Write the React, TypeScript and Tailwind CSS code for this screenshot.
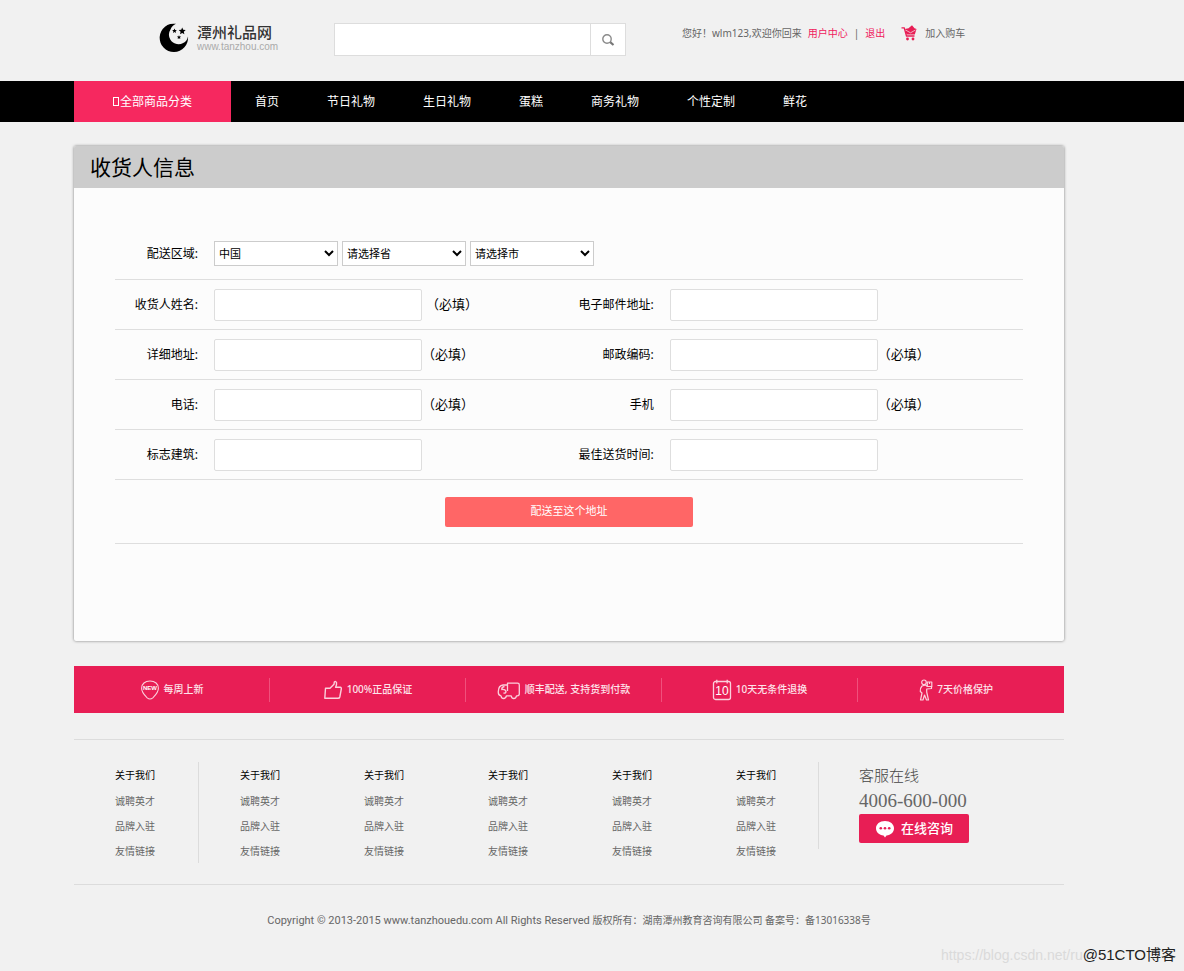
import type { ReactNode } from 'react';

const navItems = ['首页', '节日礼物', '生日礼物', '蛋糕', '商务礼物', '个性定制', '鲜花'];
const footerLinks = ['诚聘英才', '品牌入驻', '友情链接'];
const footerColumns = [0, 1, 2, 3, 4, 5];

function MoonLogo() {
  return (
    <svg viewBox="0 0 30 30" className="h-[30px] w-[30px]" aria-hidden="true">
      <path
        d="M17 .8A14.200 14.200 0 1 0 29 13.500A9.600 9.600 0 1 1 11.500 6.500C12.600 3.800 14.500 1.800 17 .8Z"
        fill="#000"
      />
      <path d="M23.200 4.500l1 2.300 2.500.2-1.900 1.700.6 2.500-2.200-1.300-2.200 1.300.6-2.500-1.900-1.700 2.500-.2z" fill="#000" />
      <path d="M15.500 5.500l.7 1.500 1.700.2-1.300 1.100.4 1.700-1.500-.9-1.500.9.4-1.700-1.300-1.100 1.700-.2z" fill="#000" />
      <path d="M20 12.200l.6 1.300 1.500.1-1.100 1 .3 1.400-1.300-.7-1.300.7.3-1.400-1.100-1 1.500-.1z" fill="#000" />
    </svg>
  );
}

function SearchIcon() {
  return (
    <svg viewBox="0 0 14 14" className="h-[14px] w-[14px]" fill="none" aria-hidden="true">
      <circle cx="6" cy="6" r="4.200" stroke="#8a8a8a" strokeWidth="1.400" />
      <path d="M9.200 9.200L12.500 12" stroke="#777" strokeWidth="2.200" />
    </svg>
  );
}

function CartIcon() {
  return (
    <svg viewBox="0 0 16 16" className="h-4 w-4" aria-hidden="true">
      <path d="M.5 2.800H3.200L5.500 11H13.500" fill="none" stroke="#e81e55" strokeWidth="1.300" />
      <path d="M3.800 4L7.500 3.200L11 .3L13.500 3.200L15.500 4L13.800 9.500H5.500Z" fill="#e81e55" />
      <path d="M4.500 5L9.500 7.800L14.500 5" fill="none" stroke="#f1f1f1" strokeWidth=".7" />
      <circle cx="6.500" cy="14" r="1.400" fill="#e81e55" />
      <circle cx="12" cy="14" r="1.400" fill="#e81e55" />
    </svg>
  );
}

function NewIcon() {
  return (
    <svg viewBox="0 0 20 20" className="h-5 w-5" aria-hidden="true">
      <path
        d="M10 1C15 1 18.400 4 18.400 8.200C18.400 12.500 15 15.500 12.800 17.800Q10 20.200 7.200 17.800C5 15.500 1.600 12.500 1.600 8.200C1.600 4 5 1 10 1Z"
        fill="none"
        stroke="#fbd0dc"
        strokeWidth="1.100"
      />
      <text x="10" y="10.300" textAnchor="middle" fontSize="6" fontWeight="700" fontFamily="Liberation Sans, sans-serif" fill="#fff">
        NEW
      </text>
    </svg>
  );
}

function ThumbIcon() {
  return (
    <svg viewBox="0 0 20 20" className="h-5 w-5" fill="none" stroke="#fbd0dc" strokeWidth="1.400" strokeLinejoin="round" aria-hidden="true">
      <path d="M2.500 8.200H7L11 4.300L11.300 2Q12.800 .9 13.500 2.600Q13.900 4.500 12.600 7.300H17.300Q18.600 7.400 18.300 9L16.800 17Q16.500 18.300 15 18.300H1.800Z" />
    </svg>
  );
}

function TruckIcon() {
  return (
    <svg viewBox="0 0 24 20" className="h-5 w-6" fill="none" stroke="#fbd0dc" strokeWidth="1.300" strokeLinejoin="round" aria-hidden="true">
      <path d="M10.500 3.200H20.500Q22.300 3.200 22.300 5V14Q22.300 15.800 20.300 15.800H19.500Q18.800 18.500 16.800 18.500Q14.800 18.500 14.200 15.800H9.500Q8.700 18.500 6.700 18.500Q4.500 18.500 4 15.800Q1 15.300 1.300 11.500Q1.500 5.500 6 5H10.500Z" />
      <path d="M10.500 5V11M7.500 6.500Q4.500 7 4.800 9.500Q8.500 9 9 11.500Q9 13.500 6.500 13" />
    </svg>
  );
}

function CalendarIcon() {
  return (
    <svg viewBox="0 0 20 22" className="h-[22px] w-5" aria-hidden="true">
      <rect x="1.500" y="2.500" width="17" height="18" rx="2" fill="none" stroke="#fbd0dc" strokeWidth="1.300" />
      <path d="M4.800 .8V4.500M15.200 .8V4.500" stroke="#fbd0dc" strokeWidth="1.300" />
      <text x="10" y="16.200" textAnchor="middle" fontSize="12" fontFamily="Liberation Sans, sans-serif" fill="#fff">
        10
      </text>
    </svg>
  );
}

function CourierIcon() {
  return (
    <svg viewBox="0 0 14 22" className="h-[22px] w-[14px]" fill="none" stroke="#fbd0dc" strokeWidth="1.200" strokeLinejoin="round" aria-hidden="true">
      <circle cx="5" cy="3.300" r="2.300" />
      <path d="M3 7Q1 9 1.300 12.500L3 14L1.500 21H4L5.500 16L7.500 21H9.500L7.700 13V10L12.500 9.500V7.500H8.500L6.500 6Z" />
      <path d="M8.300 3H12.800V7.500H8.300ZM10.500 3V5" />
    </svg>
  );
}

function ChatIcon() {
  return (
    <svg viewBox="0 0 20 18" className="h-[18px] w-5" aria-hidden="true">
      <path d="M10 1C15.200 1 19 4.200 19 8.300C19 12.300 15.800 15 11.500 15.500L10 17.500L8.500 15.500C4.200 15 1 12.300 1 8.300C1 4.200 4.800 1 10 1Z" fill="#fff" />
      <circle cx="5.800" cy="8.300" r="1.300" fill="#e81e55" />
      <circle cx="10" cy="8.300" r="1.300" fill="#e81e55" />
      <circle cx="14.200" cy="8.300" r="1.300" fill="#e81e55" />
    </svg>
  );
}

const services: { icon: ReactNode; text: string }[] = [
  { icon: <NewIcon />, text: '每周上新' },
  { icon: <ThumbIcon />, text: '100%正品保证' },
  { icon: <TruckIcon />, text: '顺丰配送, 支持货到付款' },
  { icon: <CalendarIcon />, text: '10天无条件退换' },
  { icon: <CourierIcon />, text: '7天价格保护' },
];

type FieldProps = { id: string; label: string; required?: boolean; spaced?: boolean };

function Field({ id, label, required, spaced }: FieldProps) {
  return (
    <div className="flex items-center">
      <label htmlFor={id} className="mr-4 w-[83px] shrink-0 text-right">
        {label}
      </label>
      <input
        id={id}
        type="text"
        required={required}
        className="h-8 w-[208px] rounded-xs border border-[#dedede] bg-white px-2 outline-none"
      />
      {required && <span className={spaced ? 'ml-1 text-[13px]' : 'text-[13px]'}>（必填）</span>}
    </div>
  );
}

function Row({ children }: { children: ReactNode }) {
  return <div className="grid h-[50px] grid-cols-[50.2%_1fr] border-b border-[#dedede]">{children}</div>;
}

const selectClass = 'h-[25px] w-[124px] border border-[#ccc] bg-white text-[11px] text-black';

export default function App() {
  return (
    <div className="min-h-screen bg-[#f1f1f1] font-['Noto_Sans','Noto_Sans_CJK_SC',sans-serif] text-[12px] text-black">
      <header className="flex h-[81px] items-start pt-[23px] pl-[159px]">
        <a href="#" className="flex w-[175px] gap-2">
          <MoonLogo />
          <span className="flex flex-col">
            <span className="text-[15px] leading-[18px] font-medium text-[#333]">潭州礼品网</span>
            <span className="font-['Liberation_Sans',sans-serif] text-[10px] leading-[12px] text-[#aaa]">www.tanzhou.com</span>
          </span>
        </a>
        <form className="flex h-[33px] w-[292px] border border-[#ddd] bg-white" onSubmit={(e) => e.preventDefault()}>
          <input type="search" aria-label="搜索" className="min-w-0 flex-1 px-2 outline-none" />
          <button type="submit" aria-label="搜索" className="flex w-[35px] items-center justify-center border-l border-[#ddd]">
            <SearchIcon />
          </button>
        </form>
        <div className="ml-14 flex h-5 items-center text-[10px] whitespace-nowrap text-[#666]">
          <span>您好！wlm123,欢迎你回来</span>
          <a href="#" className="ml-[6px] text-[#f0205c]">用户中心</a>
          <span className="mx-[6px]">|</span>
          <a href="#" className="text-[#f0205c]">退出</a>
          <a href="#" className="ml-4 flex items-center gap-2">
            <CartIcon />
            加入购车
          </a>
        </div>
      </header>

      <nav className="flex h-[41px] items-center bg-black pl-[74px] text-white">
        <a href="#" className="flex h-full w-[157px] items-center justify-center bg-[#f6285f]">
          <span className="mr-px h-[9px] w-[6px] border border-white" aria-hidden="true" />
          全部商品分类
        </a>
        {navItems.map((item) => (
          <a key={item} href="#" className="px-6">
            {item}
          </a>
        ))}
      </nav>

      <div className="pr-[120px] pl-[74px]">
        <main className="mt-6 rounded-xs bg-[#fcfcfc] pb-[97px] shadow-[0_0_3px_rgba(0,0,0,0.5)]">
          <h1 className="h-[42px] rounded-t-xs bg-[#ccc] px-4 text-[21px] leading-[42px]">收货人信息</h1>
          <form className="px-[41px] pt-10" onSubmit={(e) => e.preventDefault()}>
            <div className="flex h-[52px] items-center gap-1 border-b border-[#dedede]">
              <label htmlFor="country" className="mr-3 w-[83px] text-right">
                配送区域:
              </label>
              <select id="country" className={selectClass}>
                <option>中国</option>
              </select>
              <select aria-label="省" className={selectClass}>
                <option>请选择省</option>
              </select>
              <select aria-label="市" className={selectClass}>
                <option>请选择市</option>
              </select>
            </div>
            <Row>
              <Field id="name" label="收货人姓名:" required spaced />
              <Field id="email" label="电子邮件地址:" />
            </Row>
            <Row>
              <Field id="address" label="详细地址:" required />
              <Field id="postcode" label="邮政编码:" required />
            </Row>
            <Row>
              <Field id="phone" label="电话:" required />
              <Field id="mobile" label="手机" required />
            </Row>
            <Row>
              <Field id="landmark" label="标志建筑:" />
              <Field id="time" label="最佳送货时间:" />
            </Row>
            <div className="flex h-[64px] items-center justify-center border-b border-[#dedede]">
              <button type="submit" className="h-[30px] w-[248px] rounded-xs bg-[#ff6666] text-[11px] text-white">
                配送至这个地址
              </button>
            </div>
          </form>
        </main>

        <ul className="mt-[25px] flex h-[47px] items-center bg-[#e81e55] text-[10px] font-medium text-[#fde4eb]">
          {services.map(({ icon, text }) => (
            <li
              key={text}
              className="flex h-6 w-[19.8%] items-center justify-center gap-1 border-r border-[#f0507c] whitespace-nowrap last:border-r-0"
            >
              {icon}
              {text}
            </li>
          ))}
        </ul>

        <footer className="mt-[26px] border-t border-[#dcdcdc]">
          <div className="flex h-[145px] items-start border-b border-[#dcdcdc] pt-[22px]">
            {footerColumns.map((col) => (
              <section
                key={col}
                className="w-[124px] border-[#dcdcdc] pl-[41px] text-[10px] text-[#666] first:h-[101px] first:w-[125px] first:border-r nth-6:h-[87px] nth-6:border-r"
              >
                <h2 className="mb-px leading-[26px] text-black">关于我们</h2>
                <ul>
                  {footerLinks.map((link) => (
                    <li key={link} className="leading-[25px]">
                      <a href="#">{link}</a>
                    </li>
                  ))}
                </ul>
              </section>
            ))}
            <section className="pl-10 text-[#666]">
              <h2 className="text-[15px] leading-[26px] font-light text-[#444]">客服在线</h2>
              <p className="font-['Liberation_Serif',serif] text-[19px] leading-[26px]">4006-600-000</p>
              <button type="button" className="flex h-[29px] w-[110px] items-center justify-center gap-[6px] rounded-xs bg-[#e81e55] text-[13px] font-medium text-white">
                <ChatIcon />
                在线咨询
              </button>
            </section>
          </div>
          <p className="mt-[25px] text-center text-[10px] leading-[20px] text-[#666]">
            <span className="font-[Roboto,sans-serif] text-[11px]">Copyright © 2013-2015 www.tanzhouedu.com All Rights Reserved </span>
            版权所有：湖南潭州教育咨询有限公司 备案号：备13016338号
          </p>
        </footer>
      </div>

      <p className="mt-[14px] flex justify-end pr-2 font-['Liberation_Sans','Noto_Sans_CJK_SC',sans-serif] leading-[20px]">
        <span className="text-[14px] text-[#dadada]">https://blog.csdn.net/ru</span>
        <span className="text-[15px] text-[#222]">@51CTO博客</span>
      </p>
    </div>
  );
}
